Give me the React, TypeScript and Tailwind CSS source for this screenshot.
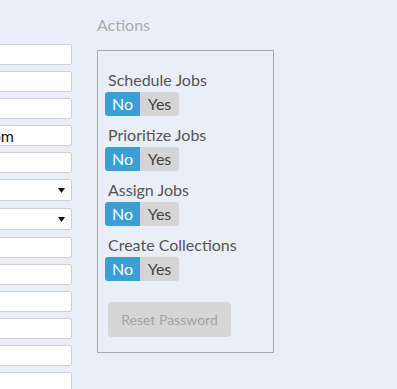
import React from "react";

type Field = { kind: "input" | "select"; value?: string };

const fields: Field[] = [
  { kind: "input" },
  { kind: "input" },
  { kind: "input" },
  { kind: "input", value: "admin@example.com" },
  { kind: "input" },
  { kind: "select" },
  { kind: "select" },
  { kind: "input" },
  { kind: "input" },
  { kind: "input" },
  { kind: "input" },
  { kind: "input" },
  { kind: "input" },
];

const permissions = ["Schedule Jobs", "Prioritize Jobs", "Assign Jobs", "Create Collections"];

function Toggle() {
  return (
    <div className="mt-[3px] flex h-[24px] w-[74px] text-[16px] leading-[24px]">
      <span className="w-[35px] rounded-l-[3px] bg-[#3a9fd2] text-center text-white">No</span>
      <span className="w-[39px] rounded-r-[3px] bg-[#d5d5d5] text-center text-[#444]">Yes</span>
    </div>
  );
}

export default function App() {
  return (
    <div
      className="flex min-h-screen items-start bg-[#eaeef9]"
      style={{ fontFamily: "Lato, 'Open Sans', sans-serif" }}
    >
      {/* left form column, cut off by the window */}
      <div className="flex w-[72px] flex-col items-end pt-[44px]">
        {fields.map((f, i) =>
          f.kind === "select" ? (
            <div
              key={i}
              className="relative mb-[7px] h-[22px] w-[200px] shrink-0 rounded-[2px] border border-[#cfcfcf] bg-white"
            >
              <svg className="absolute right-[6px] top-[8px]" width="7" height="5" viewBox="0 0 7 5">
                <path d="M0 0h7L3.5 5z" fill="#111" />
              </svg>
            </div>
          ) : (
            <div
              key={i}
              className="mb-[6px] flex h-[21px] w-[200px] shrink-0 items-center justify-end overflow-hidden rounded-[2px] border border-[#cfcfcf] bg-white pr-[57px] text-[16px] text-[#111]"
            >
              {f.value && <span className="whitespace-nowrap">{f.value}</span>}
            </div>
          )
        )}
      </div>

      {/* actions column */}
      <div className="ml-[25px] pt-[15px]">
        <h3 className="mb-[15px] text-[16px] leading-[20px] text-[#aaaaaa]">Actions</h3>
        <div className="h-[303px] w-[177px] border border-[#aaaaaa] pl-[7px] pt-[20px]">
          {permissions.map((p, i) => (
            <div key={p} className={i > 0 ? "mt-[10px]" : ""}>
              <div className="pl-[3px] text-[16px] leading-[18px] text-[#555]">{p}</div>
              <Toggle />
            </div>
          ))}
          <button className="ml-[3px] mt-[21px] h-[35px] w-[123px] rounded-[4px] bg-[#d6d6d6] text-[14px] text-[#a3a3a3]">
            Reset Password
          </button>
        </div>
      </div>
    </div>
  );
}
